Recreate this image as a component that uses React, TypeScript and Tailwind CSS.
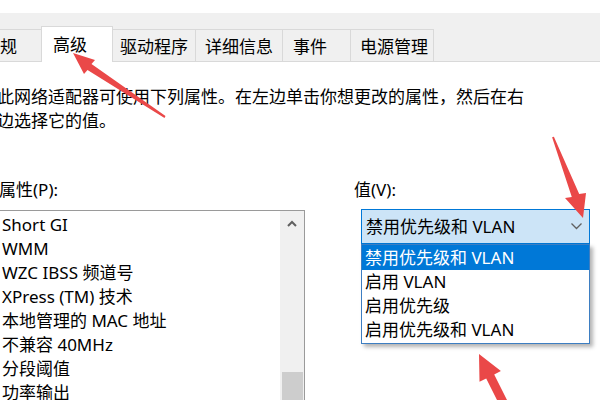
import React from "react";

const tabs = [
  { label: "规", w: "w-[41px]", pl: "pl-0", active: false, first: true },
  { label: "高级", w: "w-[72px]", pl: "pl-[11px]", active: true, first: false },
  { label: "驱动程序", w: "w-[83px]", pl: "pl-[7px]", active: false, first: false },
  { label: "详细信息", w: "w-[87px]", pl: "pl-[9px]", active: false, first: false },
  { label: "事件", w: "w-[68px]", pl: "pl-[10px]", active: false, first: false },
  { label: "电源管理", w: "w-[83px]", pl: "pl-[9px]", active: false, first: false },
];

const properties = [
  "Short GI",
  "WMM",
  "WZC IBSS 频道号",
  "XPress (TM) 技术",
  "本地管理的 MAC 地址",
  "不兼容 40MHz",
  "分段阈值",
  "功率输出",
];

const values = ["禁用优先级和 VLAN", "启用 VLAN", "启用优先级", "启用优先级和 VLAN"];

// red annotation arrows drawn over the screenshot
const Arrows = () => (
  <svg className="absolute inset-0 pointer-events-none" width="600" height="400" viewBox="0 0 600 400">
    <polygon
      fill="#ea4848"
      points="73,53 95,60 91.5,64 165.5,116 164.5,118 87.5,70 84,74"
    />
    <polygon
      fill="#ea4848"
      points="583,218 565,198 571.8,196.9 552.1,137.3 553.9,136.7 579.2,194.1 586,193"
    />
    <polygon
      fill="#ea4848"
      points="479,354 500.9,371 494.2,374.4 511,408 503,412 486.2,378.4 479.5,381.8"
    />
  </svg>
);

export default function App() {
  return (
    <div className="relative w-[600px] h-[400px] overflow-hidden bg-white text-black text-[17px] font-['Noto_Sans','Noto_Sans_CJK_SC',sans-serif]">
      <div className="h-[13px] bg-white" />

      {/* tab strip */}
      <div className="h-[49px] bg-[#f0f0f0] border-b border-[#d9d9d9] flex items-end">
        {tabs.map((t) =>
          t.active ? (
            <div
              key={t.label}
              className={`${t.w} ${t.pl} h-[36px] -mb-px bg-white border-x border-t border-[#d9d9d9] flex items-center leading-none`}
            >
              {t.label}
            </div>
          ) : (
            <div
              key={t.label}
              className={`${t.w} ${t.pl} h-[32px] border-t ${t.first ? "" : "border-r"} border-[#d9d9d9] flex items-center leading-none pt-[1px]`}
            >
              {t.label}
            </div>
          )
        )}
      </div>

      {/* panel */}
      <div className="pt-[23px]">
        <p className="ml-[-3px] leading-[24px] whitespace-nowrap">
          此网络适配器可使用下列属性。在左边单击你想更改的属性，然后在右
          <br />
          边选择它的值。
        </p>

        <div className="mt-[45px] flex">
          {/* property list */}
          <div className="w-[305px] flex flex-col">
            <div className="h-[24px] leading-[24px] ml-[-1px]">属性(P):</div>
            <div className="mt-[8px] ml-[-10px] h-[200px] border border-[#9a9a9a] bg-white flex">
              <div className="flex-1 pl-[10px] pt-[2px]">
                {properties.map((p) => (
                  <div key={p} className="h-[24px] leading-[24px] pl-[1px] whitespace-nowrap">
                    {p}
                  </div>
                ))}
              </div>
              <div className="w-[24px] bg-[#f0f0f0] flex flex-col items-center">
                <div className="h-[24px] flex items-center justify-center">
                  <svg width="10" height="7" viewBox="0 0 10 7">
                    <path d="M1 6 L5 2 L9 6" fill="none" stroke="#606060" strokeWidth="2" />
                  </svg>
                </div>
                <div className="flex-1" />
                <div className="w-[21px] h-[38px] mb-[-1px] bg-[#cdcdcd]" />
              </div>
            </div>
          </div>

          {/* value combo */}
          <div className="ml-[49px] flex flex-col">
            <div className="h-[24px] leading-[24px]">值(V):</div>
            <div className="relative mt-[7px] ml-[7px] w-[229px]">
              <div className="h-[35px] border border-[#0078d7] bg-[#cce4f7] flex items-center justify-between pl-[4px] pr-[7px] whitespace-nowrap">
                <span>禁用优先级和 VLAN</span>
                <svg width="11" height="7" viewBox="0 0 11 7">
                  <path d="M0.5 0.5 L5.5 5.5 L10.5 0.5" fill="none" stroke="#606060" strokeWidth="1.3" />
                </svg>
              </div>
              <div className="absolute top-full left-0 w-[229px] h-[100px] bg-white border border-[#3d7ec2] shadow-[3px_3px_4px_rgba(0,0,0,0.3)]">
                {values.map((v, i) => (
                  <div
                    key={v}
                    className={`h-[24px] leading-[24px] pl-[3px] whitespace-nowrap ${
                      i === 0 ? "bg-[#0078d7] text-white h-[25px] leading-[25px]" : ""
                    }`}
                  >
                    {v}
                  </div>
                ))}
              </div>
            </div>
          </div>
        </div>
      </div>

      <Arrows />
    </div>
  );
}
